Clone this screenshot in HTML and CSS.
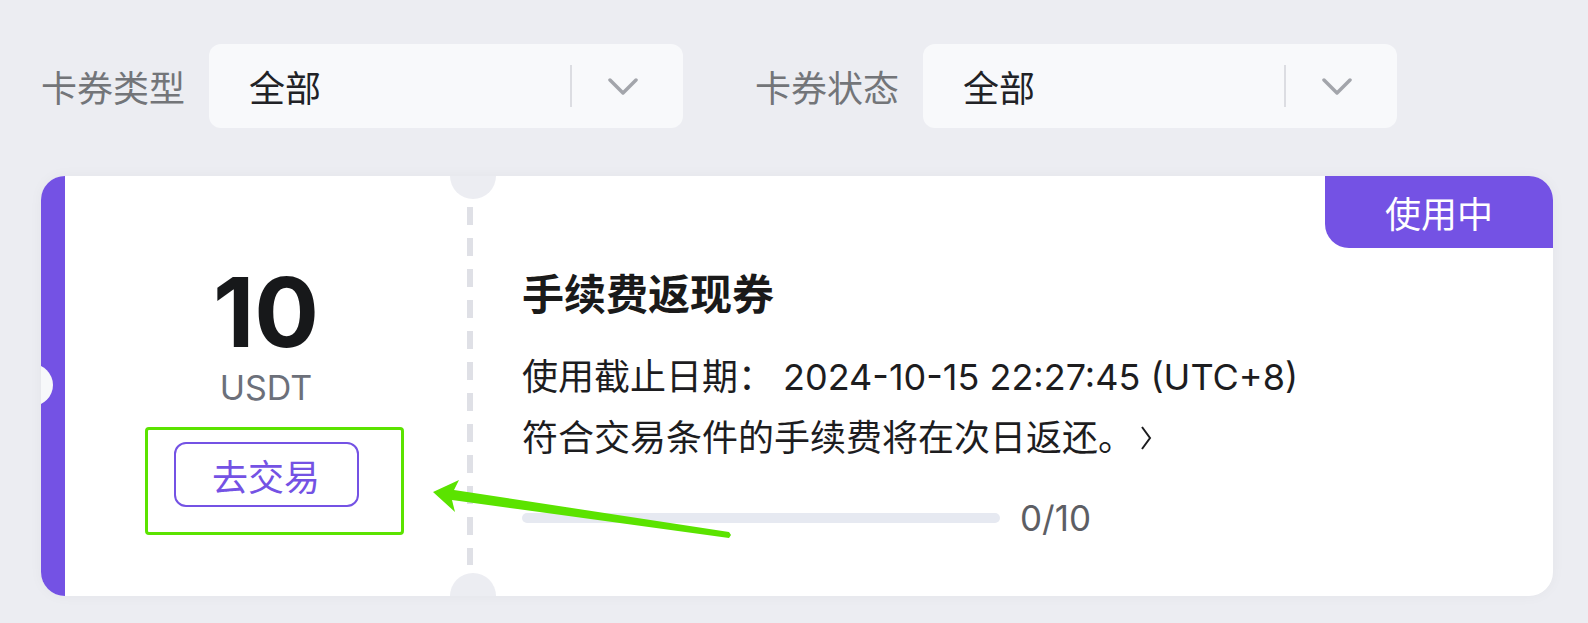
FILE: index.html
```html
<!DOCTYPE html>
<html lang="zh-CN">
<head>
  <meta charset="UTF-8">
  <title>卡券中心</title>
  <link rel="stylesheet" href="styles.css">
</head>
<body>
  <div class="filters">
    <div class="filter">
      <span class="filter-label">卡券类型</span>
      <div class="select">
        <span class="select-value">全部</span>
        <span class="select-divider"></span>
        <svg class="select-arrow" viewBox="0 0 30 17"><polyline points="2,2 15,15 28,2"/></svg>
      </div>
    </div>
    <div class="filter">
      <span class="filter-label">卡券状态</span>
      <div class="select">
        <span class="select-value">全部</span>
        <span class="select-divider"></span>
        <svg class="select-arrow" viewBox="0 0 30 17"><polyline points="2,2 15,15 28,2"/></svg>
      </div>
    </div>
  </div>

  <div class="coupon">
    <div class="coupon-stripe"></div>

    <div class="coupon-amount">
      <div class="amount">10</div>
      <div class="unit">USDT</div>
      <div class="trade-wrap">
        <button class="trade-btn">去交易</button>
        <span class="highlight"></span>
      </div>
    </div>

    <div class="coupon-divider"></div>

    <div class="coupon-info">
      <div class="coupon-title">手续费返现券</div>
      <div class="coupon-line">使用截止日期：<span class="date">2024-10-15 22:27:45 (UTC+8)</span></div>
      <div class="coupon-line">符合交易条件的手续费将在次日返还。<svg class="more" viewBox="0 0 12 28"><polyline points="2,3 10,14 2,25"/></svg></div>
      <div class="progress">
        <div class="progress-bar"></div>
        <span class="progress-count">0/10</span>
      </div>
    </div>

    <span class="badge">使用中</span>
    <span class="notch notch-top"></span>
    <span class="notch notch-bottom"></span>
    <span class="notch notch-left"></span>
  </div>

  <!-- annotation arrow -->
  <svg class="pointer" viewBox="0 0 1588 623">
    <polygon points="433,492 459,480 454,490 729,532 731,535 729,538 452,500 455,512"/>
  </svg>
</body>
</html>
```

FILE: styles.css
```css
body {
  font-family: 'Inter', 'Noto Sans CJK SC', sans-serif;
  background: #ecedf2;
  margin: 0;
  padding: 44px 35px 0 41px;
  position: relative;
  height: 623px;
  box-sizing: border-box;
  overflow: hidden;
}

/* Filters */
.filters {
  display: flex;
  align-items: center;
  gap: 72px;
}

.filter {
  display: flex;
  align-items: center;
  gap: 24px;
}

.filter-label {
  font-size: 36px;
  color: #737579;
}

.select {
  display: flex;
  align-items: center;
  width: 474px;
  height: 84px;
  padding: 0 45px 0 40px;
  box-sizing: border-box;
  background: #f8f9fb;
  border-radius: 12px;
}

.select-value {
  flex: 1;
  font-size: 36px;
  color: #212226;
}

.select-divider {
  width: 2px;
  height: 42px;
  background: #dcdde2;
  margin-right: 36px;
}

.select-arrow {
  width: 30px;
  height: 17px;
  fill: none;
  stroke: #a3a5ab;
  stroke-width: 3.5;
  stroke-linecap: round;
  stroke-linejoin: round;
}

/* Coupon card */
.coupon {
  position: relative;
  display: flex;
  width: 1512px;
  height: 420px;
  margin-top: 48px;
  background: #fff;
  border-radius: 24px;
  overflow: hidden;
  box-shadow: 0 0 14px rgba(30, 35, 60, 0.04);
}

.coupon-stripe {
  width: 24px;
  background: #7452e4;
}

.coupon-amount {
  width: 402px;
  display: flex;
  flex-direction: column;
  align-items: center;
  padding-top: 88px;
}

.amount {
  font-size: 96px;
  font-weight: 700;
  line-height: 1;
  color: #17181a;
}

.unit {
  margin-top: 11px;
  font-size: 34px;
  line-height: 1;
  color: #6c707a;
}

.trade-wrap {
  position: relative;
  margin-top: 37px;
}

.trade-btn {
  display: block;
  width: 185px;
  height: 65px;
  background: #fff;
  border: 2px solid #7452e4;
  border-radius: 12px;
  color: #7452e4;
  font-family: 'Inter', 'Noto Sans CJK SC', sans-serif;
  font-size: 36px;
  padding: 0;
}

.highlight {
  position: absolute;
  top: -15px;
  left: -29px;
  right: -45px;
  bottom: -28px;
  border: 3px solid #5be300;
  border-radius: 4px;
}

.coupon-divider {
  width: 6px;
  margin: 31px 0;
  background: repeating-linear-gradient(to bottom, #dfe0e6 0 18px, transparent 18px 31px);
}

.coupon-info {
  padding: 91px 0 0 49px;
  color: #1d1d1f;
}

.coupon-title {
  font-size: 42px;
  font-weight: 700;
  line-height: 56px;
  color: #1a1a1a;
}

.coupon-line {
  display: flex;
  align-items: center;
  font-size: 36px;
  line-height: 50px;
  margin-top: 11px;
}

.coupon-title + .coupon-line {
  margin-top: 29px;
}

.date {
  margin-left: 9px;
}

.more {
  width: 12px;
  height: 28px;
  margin-left: 6px;
  fill: none;
  stroke: #1d1d1f;
  stroke-width: 2;
}

.progress {
  display: flex;
  align-items: center;
  height: 50px;
  margin-top: 30px;
}

.progress-bar {
  width: 478px;
  height: 10px;
  border-radius: 5px;
  background: #e6e9f1;
}

.progress-count {
  margin-left: 20px;
  font-size: 35px;
  color: #5d5e64;
}

.badge {
  position: absolute;
  top: 0;
  right: 0;
  width: 228px;
  height: 72px;
  display: flex;
  align-items: center;
  justify-content: center;
  background: #7452e4;
  border-bottom-left-radius: 24px;
  color: #fff;
  font-size: 36px;
}

.notch {
  position: absolute;
  width: 46px;
  height: 46px;
  border-radius: 50%;
  background: #ecedf2;
}

.notch-top {
  left: 409px;
  top: -23px;
}

.notch-bottom {
  left: 409px;
  bottom: -23px;
}

.notch-left {
  width: 42px;
  height: 42px;
  left: -30px;
  top: 188px;
  background: #f7f8fa;
}

.pointer {
  position: absolute;
  left: 0;
  top: 0;
  width: 1588px;
  height: 623px;
  fill: #5be300;
  pointer-events: none;
}
```
